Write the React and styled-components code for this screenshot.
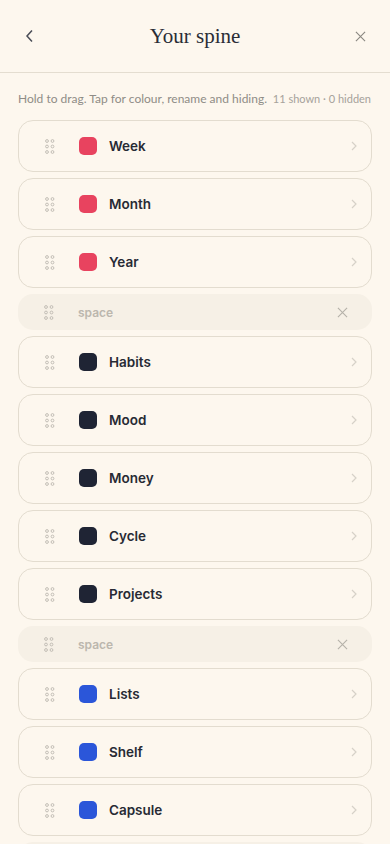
import React from "react";
import styled, { createGlobalStyle } from "styled-components";

const Global = createGlobalStyle`
  html, body { margin: 0; padding: 0; background: #fdf7ee; }
  body { font-family: Inter, "Noto Sans", sans-serif; -webkit-font-smoothing: antialiased; }
  * { box-sizing: border-box; }
`;

const Page = styled.div`
  width: 390px;
  height: 844px;
  overflow: hidden;
  background: #fdf7ee;
`;

const Header = styled.header`
  height: 73px;
  display: grid;
  grid-template-columns: 60px 1fr 60px;
  align-items: center;
  border-bottom: 1px solid #e4ddd0;
`;

const IconBtn = styled.button`
  background: none;
  border: 0;
  padding: 0;
  width: 60px;
  height: 72px;
  display: flex;
  align-items: center;
  justify-content: center;
`;

const Title = styled.h1`
  margin: 0;
  text-align: center;
  font-family: "Liberation Serif", "DejaVu Serif", serif;
  font-weight: 400;
  font-size: 21px;
  color: #2a2d36;
`;

const Hint = styled.div`
  display: flex;
  justify-content: space-between;
  align-items: baseline;
  white-space: nowrap;
  padding: 18px 19px 0 18px;
  height: 47px;
  font-family: Lato, "Noto Sans", sans-serif;
`;

const HintText = styled.span`
  font-size: 12px;
  color: #8f8c86;
`;

const Count = styled.span`
  font-size: 11px;
  color: #a6a29b;
`;

const List = styled.div`
  display: flex;
  flex-direction: column;
  gap: 6px;
  padding: 0 18px;
`;

const Row = styled.div`
  height: 52px;
  flex: none;
  border: 1px solid #e3dccf;
  border-radius: 15px;
  display: flex;
  align-items: center;
  padding: 0 13px 0 26px;
`;

const SpaceRow = styled.div`
  height: 36px;
  flex: none;
  border-radius: 15px;
  background: #f6f0e6;
  display: flex;
  align-items: center;
  padding: 0 24px 0 26px;
`;

const Swatch = styled.span`
  width: 18px;
  height: 18px;
  border-radius: 5px;
  background: ${(p) => p.$color};
  margin-left: 24px;
  flex: none;
`;

const Label = styled.span`
  margin-left: 12px;
  font-size: 13.5px;
  font-weight: 600;
  color: #272a34;
  flex: 1;
`;

const SpaceLabel = styled.span`
  margin-left: 24px;
  font-size: 12px;
  font-weight: 600;
  color: #bcb7ae;
  flex: 1;
`;

const Grip = () => (
  <svg width="10" height="15" viewBox="0 0 10 15" fill="none" stroke="#bcb8b0" strokeWidth="0.9">
    {[2, 7.5, 13].map((y) =>
      [2, 7.5].map((x) => <circle key={`${x}-${y}`} cx={x} cy={y} r="1.4" />)
    )}
  </svg>
);

const Chevron = () => (
  <svg width="8" height="12" viewBox="0 0 8 12" fill="none" stroke="#d6d1c8" strokeWidth="1.2">
    <path d="M2 2l4 4-4 4" />
  </svg>
);

const XIcon = ({ size = 11, color = "#b5b1a9" }) => (
  <svg width={size} height={size} viewBox="0 0 12 12" fill="none" stroke={color} strokeWidth="1.2">
    <path d="M1 1l10 10M11 1L1 11" />
  </svg>
);

const items = [
  { name: "Week", color: "#e8435f" },
  { name: "Month", color: "#e8435f" },
  { name: "Year", color: "#e8435f" },
  { space: true },
  { name: "Habits", color: "#1f2434" },
  { name: "Mood", color: "#1f2434" },
  { name: "Money", color: "#1f2434" },
  { name: "Cycle", color: "#1f2434" },
  { name: "Projects", color: "#1f2434" },
  { space: true },
  { name: "Lists", color: "#2b56d9" },
  { name: "Shelf", color: "#2b56d9" },
  { name: "Capsule", color: "#2b56d9" },
  { space: true },
];

export default function App() {
  return (
    <Page>
      <Global />
      <Header>
        <IconBtn>
          <svg width="10" height="14" viewBox="0 0 10 14" fill="none" stroke="#4a4d57" strokeWidth="1.5">
            <path d="M7 1.5L2 7l5 5.5" />
          </svg>
        </IconBtn>
        <Title>Your spine</Title>
        <IconBtn>
          <XIcon size={11} color="#8a8780" />
        </IconBtn>
      </Header>
      <Hint>
        <HintText>Hold to drag. Tap for colour, rename and hiding.</HintText>
        <Count>11 shown · 0 hidden</Count>
      </Hint>
      <List>
        {items.map((it, i) =>
          it.space ? (
            <SpaceRow key={i}>
              <Grip />
              <SpaceLabel>space</SpaceLabel>
              <XIcon />
            </SpaceRow>
          ) : (
            <Row key={i}>
              <Grip />
              <Swatch $color={it.color} />
              <Label>{it.name}</Label>
              <Chevron />
            </Row>
          )
        )}
      </List>
    </Page>
  );
}
